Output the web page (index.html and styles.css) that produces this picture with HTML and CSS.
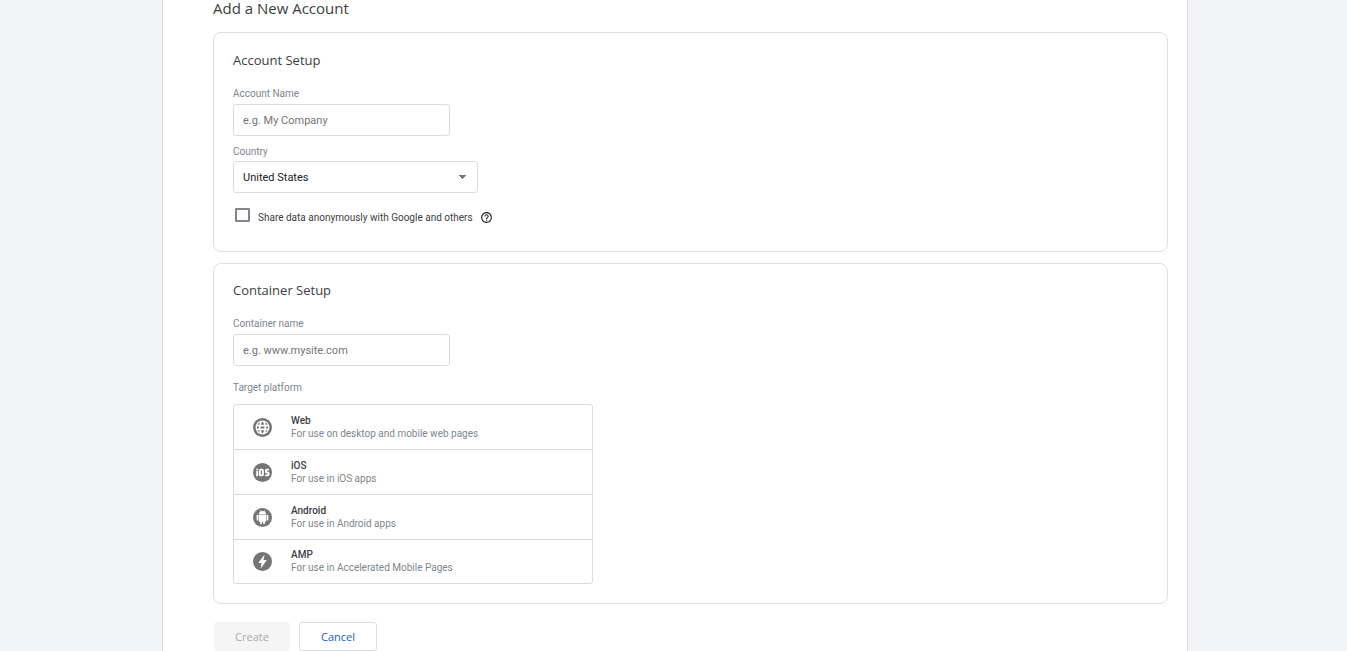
FILE: index.html
```html
<!DOCTYPE html>
<html lang="en">
<head>
<meta charset="utf-8">
<meta name="viewport" content="width=device-width, initial-scale=1">
<title>Add a New Account</title>
<link rel="stylesheet" href="styles.css">
</head>
<body>
<main class="sheet">
  <h1 class="page-title">Add a New Account</h1>
  <form class="form">
    <section class="card card-account">
      <h2 class="card-title">Account Setup</h2>
      <div class="field">
        <label class="label" for="account">Account Name</label>
        <input class="control text-input" id="account" type="text" placeholder="e.g. My Company">
      </div>
      <div class="field field-country">
        <label class="label" for="country">Country</label>
        <select class="control select" id="country"><option>United States</option></select>
      </div>
      <div class="share">
        <input class="checkbox" id="share" type="checkbox">
        <label class="share-label" for="share">Share data anonymously with Google and others</label>
        <button class="help" type="button" aria-label="Help">
          <svg viewBox="0 0 24 24" width="13" height="13"><path fill="currentColor" d="M11 18h2v-2h-2v2zm1-16C6.480 2 2 6.480 2 12s4.480 10 10 10 10-4.480 10-10S17.520 2 12 2zm0 18c-4.410 0-8-3.590-8-8s3.590-8 8-8 8 3.590 8 8-3.590 8-8 8zm0-14c-2.210 0-4 1.790-4 4h2c0-1.100.9-2 2-2s2 .9 2 2c0 2-3 1.750-3 5h2c0-2.250 3-2.500 3-5 0-2.210-1.790-4-4-4z"/></svg>
        </button>
      </div>
    </section>

    <section class="card">
      <h2 class="card-title">Container Setup</h2>
      <div class="field">
        <label class="label" for="container">Container name</label>
        <input class="control text-input" id="container" type="text" placeholder="e.g. www.mysite.com">
      </div>
      <p class="label label-platform" id="platform">Target platform</p>
      <div class="platforms" role="group" aria-labelledby="platform">
        <button class="platform" type="button">
          <svg class="platform-icon" viewBox="0 0 20 20"><circle cx="10" cy="10" r="10" fill="#757575"/><circle cx="10" cy="10" r="7.300" fill="#fff"/><g fill="#757575"><path d="M8.300 7q.5-2.400 1.700-3.300Q11.200 4.600 11.700 7zM8.300 13q.5 2.400 1.700 3.300 1.200-.9 1.700-3.300zM4.600 7q.8-1.600 2.500-2.500Q6.800 5.300 6.600 7zM15.400 7q-.8-1.600-2.500-2.500.3.800.5 2.500zM4.600 13q.8 1.600 2.500 2.500-.3-.8-.5-2.500zM15.400 13q-.8 1.600-2.500 2.500.3-.8.5-2.500zM4.200 9h2v2h-2zM8 9h4v2H8zM13.800 9h2v2h-2z"/></g></svg>
          <span class="platform-text"><span class="platform-name">Web</span><span class="platform-note">For use on desktop and mobile web pages</span></span>
        </button>
        <button class="platform" type="button">
          <svg class="platform-icon" viewBox="0 0 20 20"><circle cx="10" cy="10" r="10" fill="#757575"/><g fill="none" stroke="#fff" stroke-width="2"><path d="M4.400 8.400V14M4.400 6v1.600"/><rect x="7.200" y="7" width="3.200" height="6" rx="1"/><path d="M16.800 7h-2.200q-1 0-1 1v1q0 1 1 1h.8q1 0 1 1v1q0 1-1 1h-2.600"/></g></svg>
          <span class="platform-text"><span class="platform-name">iOS</span><span class="platform-note">For use in iOS apps</span></span>
        </button>
        <button class="platform" type="button">
          <svg class="platform-icon" viewBox="0 0 20 20"><circle cx="10" cy="10" r="10" fill="#757575"/><path fill="#fff" d="M6.100 7.300h7.800v6.500q0 .8-.8.800h-.6v1.700q0 .8-.9.800t-.9-.8v-1.700H9.300v1.700q0 .8-.9.800t-.9-.8v-1.700h-.6q-.8 0-.8-.8zM6.100 6.900q0-2.100 1.800-3.100L6.900 2.800l.5-.5 1.200 1.100q1.400-.5 2.800 0l1.200-1.100.5.500-1 1q1.800 1 1.800 3.100zM4.700 7.200q.9 0 .9.900v4.200q0 .9-.9.900t-.9-.9V8.100q0-.9.900-.9zM15.300 7.200q.9 0 .9.900v4.200q0 .9-.9.900t-.9-.9V8.100q0-.9.900-.9z"/></svg>
          <span class="platform-text"><span class="platform-name">Android</span><span class="platform-note">For use in Android apps</span></span>
        </button>
        <button class="platform" type="button">
          <svg class="platform-icon" viewBox="0 0 20 20"><circle cx="10" cy="10" r="10" fill="#757575"/><path fill="#fff" d="M12.200 2.500 5.500 11.500h3.500L8 17.500l6.600-9.200h-3.500z"/></svg>
          <span class="platform-text"><span class="platform-name">AMP</span><span class="platform-note">For use in Accelerated Mobile Pages</span></span>
        </button>
      </div>
    </section>

    <div class="actions">
      <button class="button button-create" type="submit" disabled>Create</button>
      <button class="button button-cancel" type="button">Cancel</button>
    </div>
  </form>
</main>
</body>
</html>
```
FILE: styles.css
```css
* {
  box-sizing: border-box;
}

body {
  margin: 0;
  background: #f1f3f4;
  color: #3c4043;
  font-family: Roboto, "Liberation Sans", sans-serif;
  font-size: 10px;
}

button, input, select {
  font: inherit;
  color: inherit;
}

.sheet {
  min-height: 100vh;
  margin: 0 159px 0 162px;
  padding: 0 19px 0 50px;
  background: #fff;
  border: solid #dadce0;
  border-width: 0 1px;
}

.page-title {
  margin: 0 0 16px;
  font: 400 15px/16px "Open Sans", sans-serif;
}

.card {
  margin-bottom: 11px;
  padding: 16px 19px 19px;
  border: 1px solid #e0e0e0;
  border-radius: 8px;
}

.card-account {
  padding: 17px 19px 25px;
}

.card-title {
  margin: 0 0 18px;
  font: 400 13px/20px "Open Sans", sans-serif;
}

.field {
  display: flex;
  flex-direction: column;
  align-items: flex-start;
  gap: 4px;
}

.field-country {
  gap: 3px;
  margin-top: 10px;
}

.label {
  margin: 0;
  color: #80868b;
  line-height: 12px;
}

.control {
  height: 32px;
  padding: 0 9px;
  background-color: #fff;
  border: 1px solid #dadce0;
  border-radius: 3px;
  font-size: 11px;
}

.text-input {
  width: 217px;
}

.text-input::placeholder {
  color: #757575;
  opacity: 1;
}

.select {
  width: 245px;
  appearance: none;
  color: #202124;
  background-image:
    linear-gradient(to bottom right, #757575 50%, transparent 50%),
    linear-gradient(to bottom left, #757575 50%, transparent 50%);
  background-size: 4px 4px;
  background-position: right 10px center, right 14px center;
  background-repeat: no-repeat;
}

.share {
  display: flex;
  align-items: center;
  height: 18px;
  margin-top: 15px;
  padding-left: 2px;
}

.checkbox {
  appearance: none;
  width: 15px;
  height: 14px;
  margin: 0 8px 4px 0;
  border: 2px solid #80868b;
  border-radius: 1px;
}

.checkbox:checked {
  background: #1967d2;
}

.help {
  display: flex;
  margin-left: 7px;
  padding: 0;
  border: 0;
  background: none;
  color: #202124;
}

.label-platform {
  margin: 16px 0 10px;
}

.platforms {
  max-width: 360px;
  border: 1px solid #dadce0;
  border-radius: 3px;
}

.platform {
  display: flex;
  align-items: center;
  gap: 19px;
  width: 100%;
  height: 45px;
  padding: 0 19px;
  border: 0;
  border-top: 1px solid #dadce0;
  background: none;
  text-align: left;
}

.platform:first-child {
  height: 44px;
  border-top: 0;
}

.platform:last-child {
  height: 44px;
}

.platform-icon {
  width: 19px;
  height: 19px;
}

.platform-text {
  display: flex;
  flex-direction: column;
  padding-bottom: 1px;
  line-height: 13px;
}

.platform-name {
  font-weight: 500;
}

.platform-note {
  color: #80868b;
}

.actions {
  display: flex;
  gap: 9px;
  padding: 7px 0 0 1px;
}

.button {
  height: 29px;
  border: 1px solid #dadce0;
  border-radius: 3px;
  background: #fff;
  font: 500 11px "Open Sans", sans-serif;
}

.button-create {
  width: 76px;
  border-color: #f5f5f5;
  background: #f5f5f5;
  color: #a6a9ac;
}

.button-cancel {
  width: 78px;
  color: #1a5dba;
}
```
